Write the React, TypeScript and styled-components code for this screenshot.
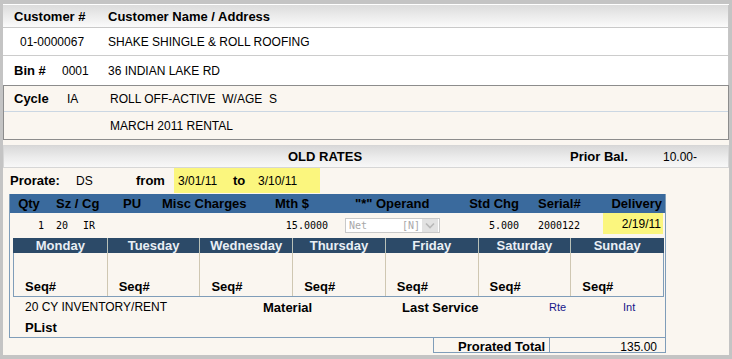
import React from 'react';
import styled, { createGlobalStyle } from 'styled-components';

const GlobalStyle = createGlobalStyle`
  html, body { margin: 0; padding: 0; }
  body {
    font-family: "Liberation Sans", Arial, sans-serif;
    background: #c4c4c4;
  }
`;

const Frame = styled.div`
  width: 732px;
  height: 359px;
  box-sizing: border-box;
  padding: 4px 3px 4px 3px;
  background: #c4c4c4;
`;

const Inner = styled.div`
  height: 100%;
  box-sizing: border-box;
  background: #faf6f0;
  border-top: 1px solid #ffffff;
  display: flex;
  flex-direction: column;
  color: #000;
`;

const Panel = styled.section`
  background: #ffffff;
  border-right: 1px solid #c6c6c6;
`;

const HeadRow = styled.div`
  display: flex;
  align-items: center;
  height: 22px;
  padding-left: 11px;
  background: linear-gradient(#dcdcdc, #f0f0f0 65%, #fbfbfb);
  border-bottom: 1px solid #c9c9c9;
`;

const InfoRow = styled.div<{ $h: number; $line?: string; $pl?: number }>`
  display: flex;
  align-items: center;
  height: ${(p) => p.$h}px;
  padding-left: ${(p) => p.$pl ?? 11}px;
  ${(p) => (p.$line ? `border-bottom: 1px solid ${p.$line};` : '')}
`;

const Cell = styled.div<{ $w?: number; $pl?: number; $pr?: number; $align?: string; $bold?: boolean }>`
  flex: ${(p) => (p.$w ? `0 0 ${p.$w}px` : '1 1 auto')};
  box-sizing: border-box;
  padding-left: ${(p) => p.$pl ?? 0}px;
  padding-right: ${(p) => p.$pr ?? 0}px;
  text-align: ${(p) => p.$align ?? 'left'};
  font-weight: ${(p) => (p.$bold ? 'bold' : 'normal')};
  font-size: ${(p) => (p.$bold ? 13 : 12)}px;
  white-space: pre;
`;

const CycleBox = styled.section`
  background: #faf6f0;
  border: 1px solid #8c8c8c;
`;

const Spacer = styled.div<{ $h: number }>`
  height: ${(p) => p.$h}px;
`;

const RatesBar = styled.div`
  display: flex;
  align-items: center;
  height: 21px;
  border: 1px solid #d6d6d6;
  background: linear-gradient(#d9d9d9, #ececec 55%, #f8f8f8);
`;

const ProrateRow = styled.div`
  display: flex;
  align-items: center;
  height: 25px;
  margin-bottom: 1px;
  padding-left: 7px;
`;

const Highlight = styled.div<{ $w: number }>`
  flex: 0 0 ${(p) => p.$w}px;
  display: flex;
  align-items: center;
  align-self: stretch;
  background: #fbf67e;
`;

const GridBox = styled.section`
  margin-left: 6px;
  width: 657px;
  box-sizing: border-box;
  border: 1px solid #7f9db9;
  border-top: 0;
`;

const ChargeHead = styled.div`
  display: flex;
  align-items: center;
  height: 19px;
  background: #3a6a9d;
  color: #000;
`;

const ChargeRow = styled.div`
  display: flex;
  align-items: center;
  height: 24px;
`;

const Mono = styled.div<{ $w?: number; $pl?: number; $pr?: number; $align?: string }>`
  flex: ${(p) => (p.$w ? `0 0 ${p.$w}px` : '1 1 auto')};
  box-sizing: border-box;
  padding-left: ${(p) => p.$pl ?? 0}px;
  padding-right: ${(p) => p.$pr ?? 0}px;
  text-align: ${(p) => p.$align ?? 'left'};
  font-family: "DejaVu Sans Mono", "Liberation Mono", monospace;
  font-size: 10px;
  white-space: pre;
`;

const Gap = styled.span<{ $w: number }>`
  display: inline-block;
  width: ${(p) => p.$w}px;
`;

const SelectBox = styled.div`
  margin-left: 15px;
  width: 95px;
  height: 15px;
  box-sizing: border-box;
  border: 1px solid #c9c9c9;
  background: #ffffff;
  display: flex;
  align-items: center;
  font-family: "DejaVu Sans Mono", "Liberation Mono", monospace;
  font-size: 10px;
  color: #a8a8a8;
`;

const SelectText = styled.span<{ $w?: number; $pl?: number }>`
  flex: ${(p) => (p.$w ? `0 0 ${p.$w}px` : '1 1 auto')};
  padding-left: ${(p) => p.$pl ?? 0}px;
  white-space: pre;
`;

const SelectArrow = styled.span`
  flex: 0 0 16px;
  height: 13px;
  margin-right: 1px;
  background: #e2e2e2;
  display: flex;
  align-items: center;
  justify-content: center;
`;

const DateCell = styled.div`
  flex: 0 0 64px;
  align-self: stretch;
  display: flex;
  padding: 0 1px 3px 3px;
  box-sizing: border-box;
`;

const DateFill = styled.div`
  flex: 1;
  background: #fbf67e;
  display: flex;
  align-items: center;
  justify-content: flex-end;
  padding-right: 2px;
  font-size: 12px;
`;

const DaysTable = styled.div`
  margin: 1px 0 0 3px;
  width: 651px;
`;

const DaysHead = styled.div`
  display: grid;
  grid-template-columns: repeat(7, 1fr);
  height: 15px;
  background: #2c4a68;
  padding: 0 1px;
`;

const DayName = styled.div<{ $first?: boolean }>`
  text-align: center;
  font-weight: bold;
  font-size: 13px;
  line-height: 15px;
  color: #e9eff5;
  border-left: ${(p) => (p.$first ? '0' : '1px solid #b9c1b8')};
`;

const DaysBody = styled.div`
  display: grid;
  grid-template-columns: repeat(7, 1fr);
  height: 44px;
  box-sizing: border-box;
  border: 1px solid #7f9db9;
  border-top: 0;
`;

const DaySlot = styled.div<{ $first?: boolean }>`
  display: flex;
  align-items: flex-end;
  padding: 0 0 2px 11px;
  font-weight: bold;
  font-size: 13px;
  line-height: 15px;
  border-left: ${(p) => (p.$first ? '0' : '1px solid #cfc7b2')};
`;

const Small = styled.div<{ $w?: number }>`
  flex: ${(p) => (p.$w ? `0 0 ${p.$w}px` : '1 1 auto')};
  font-size: 11px;
  color: #15158a;
`;

const TotalBox = styled.div`
  margin-left: 430px;
  width: 233px;
  height: 15px;
  box-sizing: border-box;
  border: 1px solid #7f9db9;
  border-top: 0;
  display: flex;
`;

const TotalLabel = styled.div`
  flex: 0 0 116px;
  padding-left: 24px;
  box-sizing: border-box;
  border-right: 1px solid #7f9db9;
  font-weight: bold;
  font-size: 13px;
  line-height: 18px;
  white-space: pre;
`;

const TotalValue = styled.div`
  flex: 1;
  text-align: right;
  padding-right: 8px;
  font-size: 12px;
  line-height: 18px;
`;

const days = ['Monday', 'Tuesday', 'Wednesday', 'Thursday', 'Friday', 'Saturday', 'Sunday'];

const Chevron = () => (
  <svg width="10" height="7" viewBox="0 0 10 7">
    <path d="M1 1.5 L5 5.5 L9 1.5" fill="none" stroke="#b8b8b8" strokeWidth="1.6" />
  </svg>
);

export default function App() {
  return (
    <>
      <GlobalStyle />
      <Frame>
        <Inner>
          <Panel>
            <HeadRow>
              <Cell $w={94} $bold>Customer #</Cell>
              <Cell $bold>Customer Name / Address</Cell>
            </HeadRow>
            <InfoRow $h={27} $line="#cccccc">
              <Cell $w={94} $pl={6}>01-0000067</Cell>
              <Cell>SHAKE SHINGLE &amp; ROLL ROOFING</Cell>
            </InfoRow>
            <InfoRow $h={29}>
              <Cell $w={48} $bold>Bin #</Cell>
              <Cell $w={46}>0001</Cell>
              <Cell>36 INDIAN LAKE RD</Cell>
            </InfoRow>
          </Panel>
          <CycleBox>
            <InfoRow $h={25} $pl={10} $line="#cbd7e3">
              <Cell $w={53} $bold>Cycle</Cell>
              <Cell $w={43}>IA</Cell>
              <Cell>ROLL OFF-ACTIVE  W/AGE  S</Cell>
            </InfoRow>
            <InfoRow $h={27} $pl={10}>
              <Cell $w={96} />
              <Cell>MARCH 2011 RENTAL</Cell>
            </InfoRow>
          </CycleBox>
          <Spacer $h={5} />
          <RatesBar>
            <Cell $w={284} />
            <Cell $w={282} $bold>OLD RATES</Cell>
            <Cell $w={93} $bold>Prior Bal.</Cell>
            <Cell>10.00-</Cell>
          </RatesBar>
          <ProrateRow>
            <Cell $w={66} $bold>Prorate:</Cell>
            <Cell $w={60}>DS</Cell>
            <Cell $w={38} $bold>from</Cell>
            <Highlight $w={146}>
              <Cell $w={59} $pl={4}>3/01/11</Cell>
              <Cell $w={25} $bold>to</Cell>
              <Cell>3/10/11</Cell>
            </Highlight>
          </ProrateRow>
          <GridBox>
            <ChargeHead>
              <Cell $w={38} $align="center" $bold>Qty</Cell>
              <Cell $w={62} $pl={8} $bold>Sz / Cg</Cell>
              <Cell $w={40} $pl={13} $bold>PU</Cell>
              <Cell $w={105} $pl={12} $bold>Misc Charges</Cell>
              <Cell $w={75} $pl={20} $bold>Mth $</Cell>
              <Cell $w={115} $pl={25} $bold>"*" Operand</Cell>
              <Cell $w={80} $pr={6} $align="right" $bold>Std Chg</Cell>
              <Cell $w={75} $pl={13} $bold>Serial#</Cell>
              <Cell $pr={3} $align="right" $bold>Delivery</Cell>
            </ChargeHead>
            <ChargeRow>
              <Mono $w={38} $pr={4} $align="right">1</Mono>
              <Mono $w={62} $pl={8}>20<Gap $w={15} />IR</Mono>
              <Mono $w={40} />
              <Mono $w={105} />
              <Mono $w={75} $pr={2} $align="right">15.0000</Mono>
              <Cell $w={115}>
                <SelectBox>
                  <SelectText $w={53} $pl={3}>Net</SelectText>
                  <SelectText>[N]</SelectText>
                  <SelectArrow><Chevron /></SelectArrow>
                </SelectBox>
              </Cell>
              <Mono $w={80} $pr={6} $align="right">5.000</Mono>
              <Mono $w={75} $pl={13}>2000122</Mono>
              <DateCell>
                <DateFill>2/19/11</DateFill>
              </DateCell>
            </ChargeRow>
            <DaysTable>
              <DaysHead>
                {days.map((d, i) => (
                  <DayName key={d} $first={i === 0}>{d}</DayName>
                ))}
              </DaysHead>
              <DaysBody>
                {days.map((d, i) => (
                  <DaySlot key={d} $first={i === 0}>Seq#</DaySlot>
                ))}
              </DaysBody>
            </DaysTable>
            <InfoRow $h={20} $pl={15}>
              <Cell $w={238}>20 CY INVENTORY/RENT</Cell>
              <Cell $w={139} $bold>Material</Cell>
              <Cell $w={147} $bold>Last Service</Cell>
              <Small $w={74}>Rte</Small>
              <Small>Int</Small>
            </InfoRow>
            <InfoRow $h={20} $pl={15}>
              <Cell $bold>PList</Cell>
            </InfoRow>
          </GridBox>
          <TotalBox>
            <TotalLabel>Prorated Total</TotalLabel>
            <TotalValue>135.00</TotalValue>
          </TotalBox>
        </Inner>
      </Frame>
    </>
  );
}
